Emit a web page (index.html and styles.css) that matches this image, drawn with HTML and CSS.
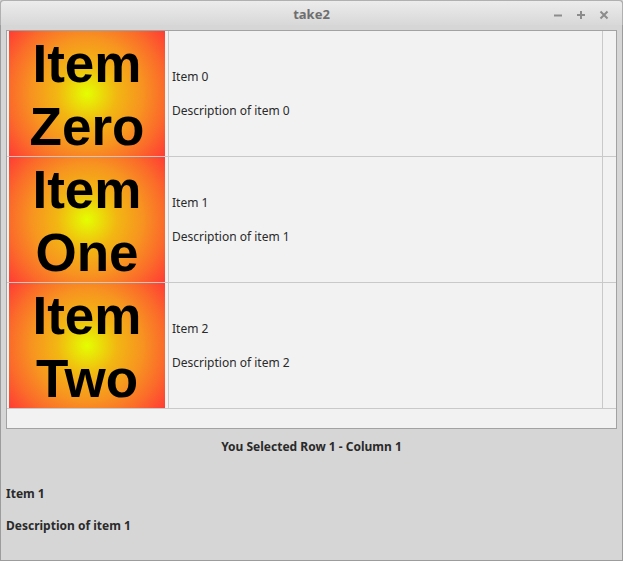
FILE: index.html
```html
<!DOCTYPE html>
<html>
<head>
<meta charset="utf-8">
<title>take2</title>
<link rel="stylesheet" href="styles.css">
</head>
<body>
<div class="window">
  <div class="titlebar">
    <span class="title">take2</span>
    <div class="controls">
      <svg class="ctl" width="10" height="10" viewBox="0 0 10 10"><path d="M1 5.5H9" stroke="#8c8c8c" stroke-width="2"/></svg>
      <svg class="ctl" width="10" height="10" viewBox="0 0 10 10"><path d="M1 5H9M5 1V9" stroke="#8c8c8c" stroke-width="2"/></svg>
      <svg class="ctl" width="10" height="10" viewBox="0 0 10 10"><path d="M1.5 1.5L8.5 8.5M8.5 1.5L1.5 8.5" stroke="#8c8c8c" stroke-width="2"/></svg>
    </div>
  </div>
  <div class="content">
    <div class="table">
      <div class="row">
        <div class="cell-img"><div class="pic">Item<br>Zero</div></div>
        <div class="cell-text"><div class="lbl">Item 0</div><div class="lbl">Description of item 0</div></div>
        <div class="cell-end"></div>
      </div>
      <div class="row">
        <div class="cell-img"><div class="pic">Item<br>One</div></div>
        <div class="cell-text"><div class="lbl">Item 1</div><div class="lbl">Description of item 1</div></div>
        <div class="cell-end"></div>
      </div>
      <div class="row">
        <div class="cell-img"><div class="pic">Item<br>Two</div></div>
        <div class="cell-text"><div class="lbl">Item 2</div><div class="lbl">Description of item 2</div></div>
        <div class="cell-end"></div>
      </div>
    </div>
    <div class="selected">You Selected Row 1 - Column 1</div>
    <div class="detail">Item 1</div>
    <div class="detail desc">Description of item 1</div>
  </div>
</div>
</body>
</html>
```
FILE: styles.css
```css
html, body {
  margin: 0;
  padding: 0;
  background: #d6d6d6;
}
.window {
  width: 623px;
  height: 561px;
  box-sizing: border-box;
  border: 1px solid #9c9c9c;
  border-top: none;
  border-radius: 4px 4px 0 0;
  background: #d6d6d6;
  font-family: "Noto Sans", "Open Sans", sans-serif;
  color: #2e2e2e;
  display: flex;
  flex-direction: column;
}
.titlebar {
  height: 25px;
  flex: none;
  position: relative;
  display: flex;
  align-items: center;
  justify-content: center;
  background: linear-gradient(#ececec, #d8d8d8);
  border-top: 1px solid #b0b0b0;
  border-radius: 4px 4px 0 0;
  box-sizing: border-box;
  margin: 0 -1px;
  border-left: 1px solid #b0b0b0;
  border-right: 1px solid #b0b0b0;
}
.title {
  font-weight: bold;
  font-size: 13px;
  color: #6e6e6e;
  line-height: 16px;
  margin-top: 1px;
}
.controls {
  position: absolute;
  right: 13px;
  top: 9px;
  display: flex;
  gap: 13px;
}
.ctl { display: block; }
.content {
  padding: 5px 5px 0 5px;
  display: flex;
  flex-direction: column;
}
.table {
  border: 1px solid #a2a2a2;
  background: #f2f2f2;
  height: 399px;
  box-sizing: border-box;
}
.row {
  display: flex;
  height: 126px;
  border-bottom: 1px solid #c9c9c9;
  box-sizing: border-box;
}
.cell-img {
  width: 162px;
  flex: none;
  border-right: 1px solid #c9c9c9;
  box-sizing: border-box;
  padding-left: 2px;
}
.pic {
  width: 156px;
  height: 125px;
  background: radial-gradient(ellipse 100px 100px at 50% 50%, #e4ff00 0%, #f2b612 30%, #f79420 55%, #fb6a2a 78%, #ff3c34 100%);
  font-family: "Liberation Sans", Arial, sans-serif;
  font-weight: bold;
  font-size: 53px;
  line-height: 63px;
  color: #000;
  text-align: center;
  padding-top: 1px;
  box-sizing: border-box;
}
.cell-text {
  width: 434px;
  flex: none;
  border-right: 1px solid #c9c9c9;
  box-sizing: border-box;
  padding-left: 3px;
  display: flex;
  flex-direction: column;
  justify-content: center;
  gap: 17px;
}
.lbl {
  font-size: 12px;
  line-height: 17px;
  color: #2a2a2a;
}
.cell-end { flex: 1; }
.selected {
  margin-top: 9px;
  text-align: center;
  font-weight: bold;
  font-size: 12px;
  line-height: 17px;
  color: #2a2a2a;
}
.detail {
  margin-top: 30px;
  font-weight: bold;
  font-size: 12px;
  line-height: 17px;
  color: #2a2a2a;
  padding-left: 0;
}
.detail.desc { margin-top: 15px; }
```
